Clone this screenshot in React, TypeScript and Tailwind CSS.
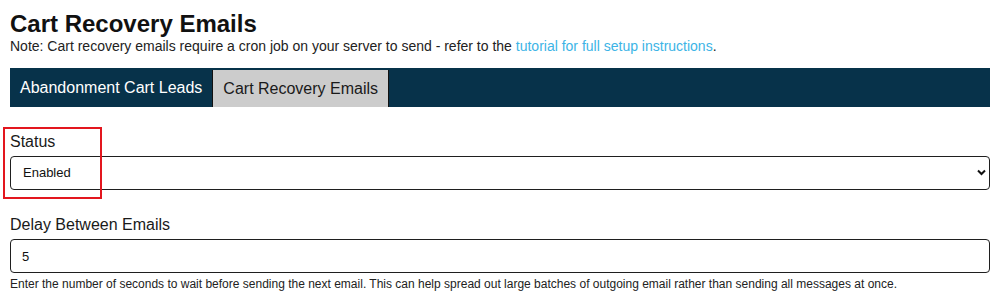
import { useState } from 'react';

export default function App() {
  const [status, setStatus] = useState('enabled');
  const [delay, setDelay] = useState('5');

  return (
    <div className="relative min-h-[306px] bg-white px-[10px] text-[#111] font-['Liberation_Sans',Arial,sans-serif]">
      {/* header */}
      <h1 className="pt-[10px] text-[24px] leading-[28px] font-bold text-[#111]">Cart Recovery Emails</h1>
      <p className="text-[14px] leading-[16px] text-[#222]">
        Note: Cart recovery emails require a cron job on your server to send - refer to the{' '}
        <a href="#" className="text-[#3cb4e6]">tutorial for full setup instructions</a>.
      </p>

      {/* tabs */}
      <div className="mt-[14px] flex h-[39px] items-end bg-[#07324a]">
        <button className="flex h-[39px] items-center px-[10px] text-[16px] text-white">
          Abandonment Cart Leads
        </button>
        <button className="flex h-[37px] items-center border-x border-[#111] bg-[#cccccc] px-[10px] text-[16px] text-[#1a1a1a]">
          Cart Recovery Emails
        </button>
      </div>

      {/* status */}
      <div className="mt-[26px]">
        <label className="mb-[5px] block text-[16px] leading-[18px] text-[#1a1a1a]">Status</label>
        <div className="relative">
          <select
            value={status}
            onChange={(e) => setStatus(e.target.value)}
            className="block h-[34px] w-full appearance-none rounded-[4px] border border-[#1f1f1f] bg-white pl-[12px] text-[13px] text-[#111] outline-none"
          >
            <option value="enabled">Enabled</option>
            <option value="disabled">Disabled</option>
          </select>
          <svg
            className="pointer-events-none absolute right-[4px] top-[13px]"
            width="9"
            height="7"
            viewBox="0 0 9 7"
          >
            <path d="M1 1.5 L4.5 5 L8 1.5" fill="none" stroke="#111" strokeWidth="2" />
          </svg>
        </div>
      </div>

      {/* delay */}
      <div className="mt-[26px]">
        <label className="mb-[5px] block text-[16px] leading-[18px] text-[#1a1a1a]">Delay Between Emails</label>
        <input
          type="text"
          value={delay}
          onChange={(e) => setDelay(e.target.value)}
          className="block h-[34px] w-full rounded-[4px] border border-[#1f1f1f] bg-white pl-[11px] text-[13px] text-[#111] outline-none"
        />
        <p className="mt-[4px] text-[12px] leading-[14px] text-[#222]">
          Enter the number of seconds to wait before sending the next email. This can help spread out large batches of outgoing email rather than sending all messages at once.
        </p>
      </div>

      {/* annotation box */}
      <div className="pointer-events-none absolute left-[3px] top-[127px] h-[72px] w-[99px] border-2 border-[#e3161e]" />
    </div>
  );
}
